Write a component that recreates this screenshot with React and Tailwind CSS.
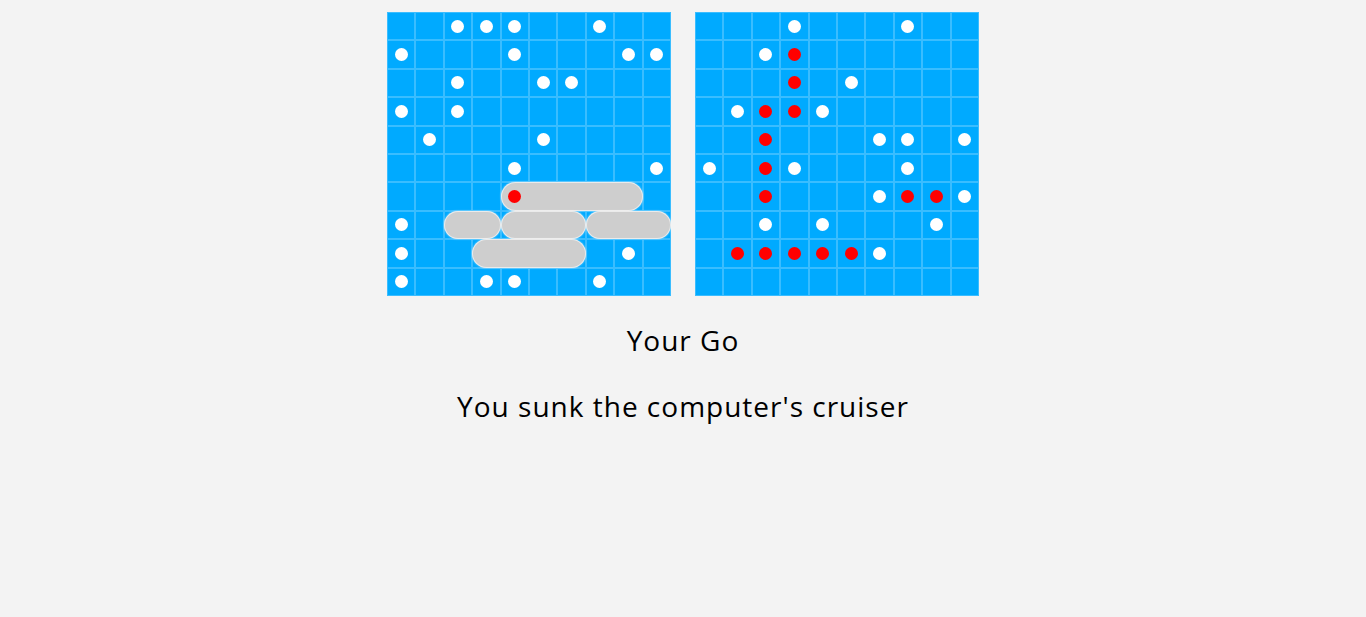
import React from "react";

// 'w' = miss (white peg), 'r' = hit (red peg)
const playerBoardShots = {
  "0-2": "w", "0-3": "w", "0-4": "w", "0-7": "w",
  "1-0": "w", "1-4": "w", "1-8": "w", "1-9": "w",
  "2-2": "w", "2-5": "w", "2-6": "w",
  "3-0": "w", "3-2": "w",
  "4-1": "w", "4-5": "w",
  "5-4": "w", "5-9": "w",
  "6-4": "r",
  "7-0": "w",
  "8-0": "w", "8-8": "w",
  "9-0": "w", "9-3": "w", "9-4": "w", "9-7": "w",
};

const computerBoardShots = {
  "0-3": "w", "0-7": "w",
  "1-2": "w", "1-3": "r",
  "2-3": "r", "2-5": "w",
  "3-1": "w", "3-2": "r", "3-3": "r", "3-4": "w",
  "4-2": "r", "4-6": "w", "4-7": "w", "4-9": "w",
  "5-0": "w", "5-2": "r", "5-3": "w", "5-7": "w",
  "6-2": "r", "6-6": "w", "6-7": "r", "6-8": "r", "6-9": "w",
  "7-2": "w", "7-4": "w", "7-8": "w",
  "8-1": "r", "8-2": "r", "8-3": "r", "8-4": "r", "8-5": "r", "8-6": "w",
};

// row, start col, length
const ships = [
  { row: 6, col: 4, len: 5 },
  { row: 7, col: 2, len: 2 },
  { row: 7, col: 4, len: 3 },
  { row: 7, col: 7, len: 3 },
  { row: 8, col: 3, len: 4 },
];

const CELL = 28.4;

const Peg = ({ type }) => (
  <div
    className={
      "w-[13px] h-[13px] rounded-full " +
      (type === "r" ? "bg-[#ff0000]" : "bg-white")
    }
  />
);

const Board = ({ shots, showShips }) => {
  const cells = [];
  for (let r = 0; r < 10; r++) {
    for (let c = 0; c < 10; c++) {
      cells.push({ r, c, shot: shots[`${r}-${c}`] });
    }
  }

  return (
    <div className="relative w-[284px] h-[284px] bg-[#00aaff] grid grid-cols-10 grid-rows-10">
      {cells.map((cell) => (
        <div key={`${cell.r}-${cell.c}`} className="border border-[#3abdff]" />
      ))}
      {showShips &&
        ships.map((s, i) => (
          <div
            key={i}
            className="absolute rounded-full bg-[#cecece] border border-white/60 shadow-[0_0_2px_rgba(255,255,255,0.6)]"
            style={{
              left: s.col * CELL,
              top: s.row * CELL,
              width: s.len * CELL,
              height: CELL,
            }}
          />
        ))}
      {cells
        .filter((cell) => cell.shot)
        .map((cell) => (
          <div
            key={`p-${cell.r}-${cell.c}`}
            className="absolute flex items-center justify-center w-[28.4px] h-[28.4px]"
            style={{ left: cell.c * CELL, top: cell.r * CELL }}
          >
            <Peg type={cell.shot} />
          </div>
        ))}
    </div>
  );
};

export default function App() {
  return (
    <div className="min-h-[617px] w-full bg-[#f3f3f3] text-black font-['Open_Sans',sans-serif]">
      <div className="flex justify-center gap-6 pt-3">
        <Board shots={playerBoardShots} showShips />
        <Board shots={computerBoardShots} />
      </div>
      <p className="text-center text-[28px] leading-none tracking-[1px] mt-[30px]">
        Your Go
      </p>
      <p className="text-center text-[28px] leading-none tracking-[1px] mt-[38px]">
        You sunk the computer's cruiser
      </p>
    </div>
  );
}
